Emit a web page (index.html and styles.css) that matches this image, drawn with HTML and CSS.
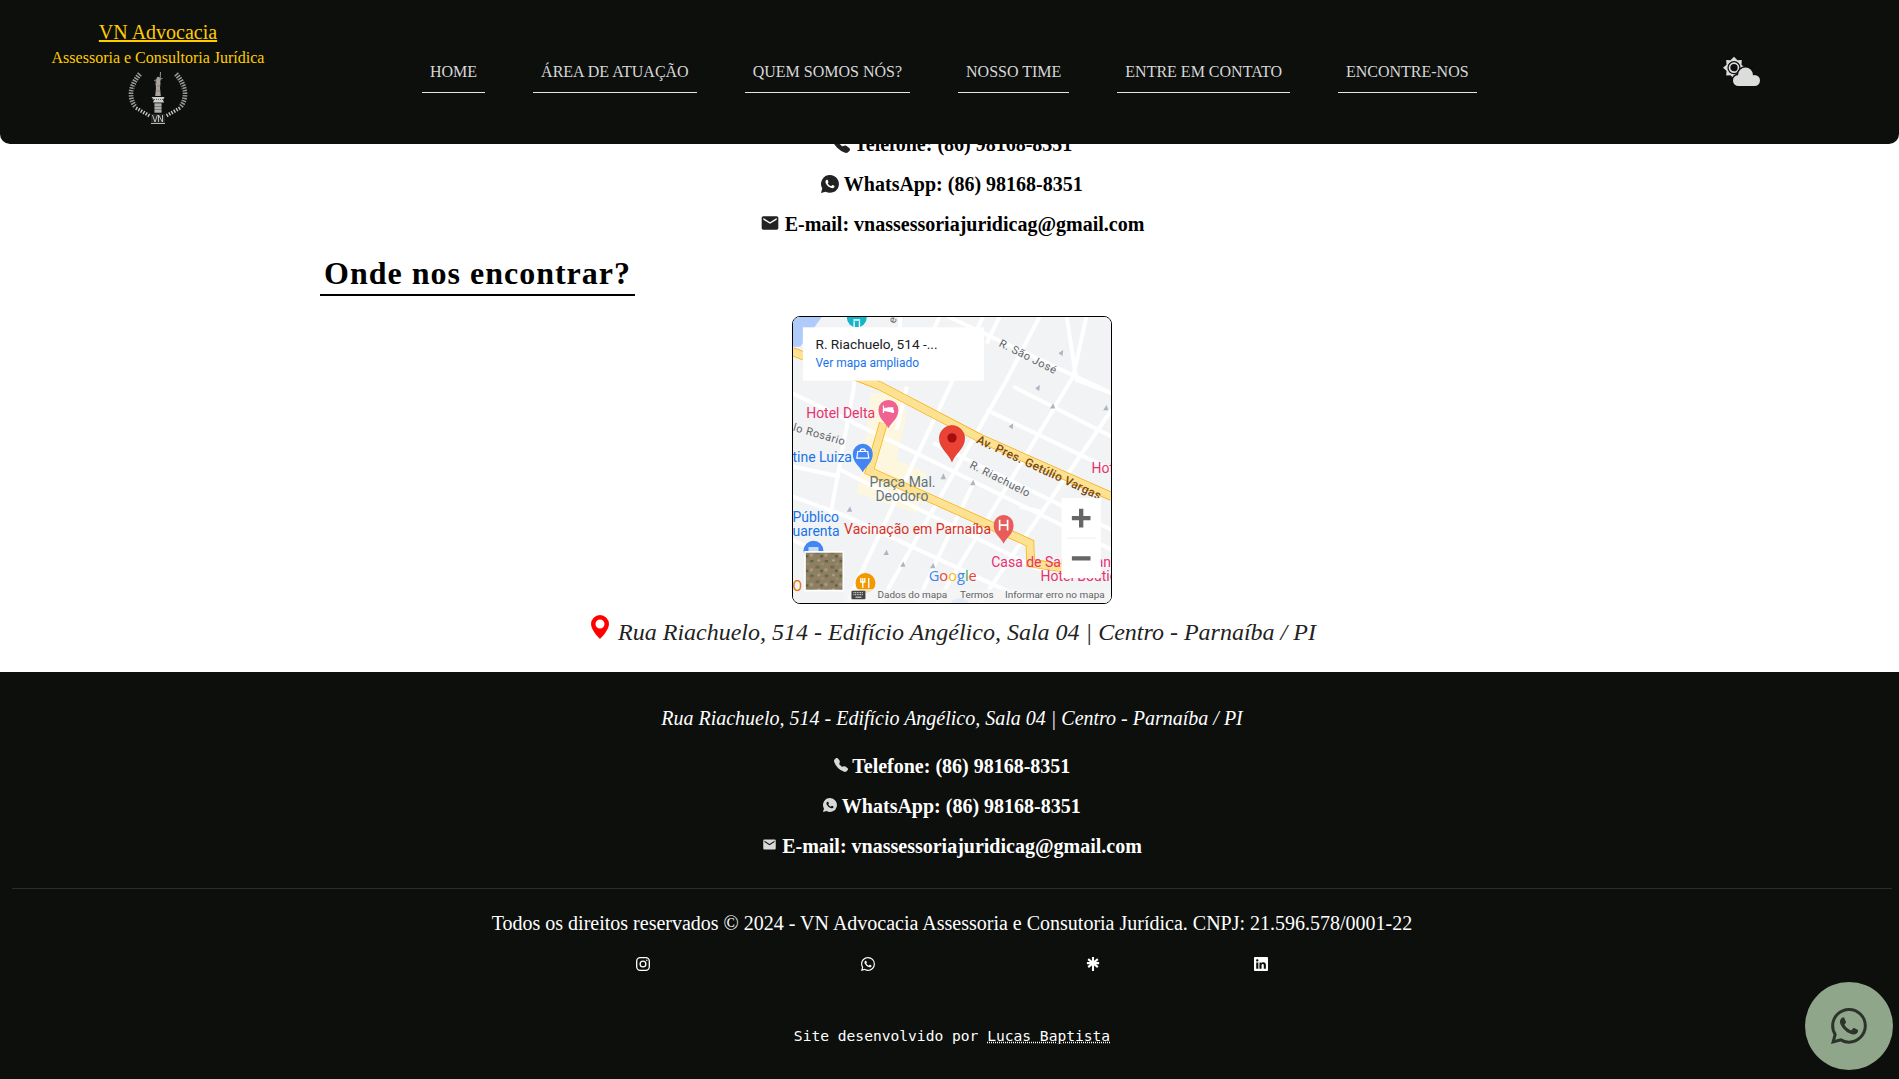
FILE: index.html
```html
<!DOCTYPE html>
<html lang="pt-BR">
<head>
<meta charset="utf-8">
<title>VN Advocacia</title>
<link rel="stylesheet" href="styles.css">
</head>
<body>
<div class="page">
  <header class="topbar">
    <div class="brand">
      <a class="brand-name" href="#">VN Advocacia</a>
      <div class="brand-sub">Assessoria e Consultoria Jurídica</div>
      <svg class="emblem" viewBox="0 0 60 52" width="60" height="52">
        <g fill="none" stroke="#9a9a9a" stroke-width="5" stroke-dasharray="1.500 1.100">
          <path d="M12 2C1 14 1 28 8 35"/>
          <path d="M48 2C59 14 59 28 52 35"/>
        </g>
        <g fill="none" stroke="#c8c8c8" stroke-width="3.500" stroke-dasharray="1.400 1.400">
          <path d="M8 36L22 44"/>
          <path d="M52 36L38 44"/>
        </g>
        <path d="M6.500 12C5 20 5.500 27 9 33M53.500 12C55 20 54.500 27 51 33" fill="none" stroke="#0d0f0d" stroke-width=".7"/>
        <path d="M32.500 0L32 9M26 8.500L34.500 6.500" stroke="#cfcfcf" stroke-width=".7" fill="none"/>
        <path d="M29 5h2.500l1 6-.5 5 .8 8h-5.600l.8-8-.5-5z" fill="#a9a39c"/>
        <path d="M26 8l3 3M29 14h3M28.500 19h4" stroke="#6f6a65" stroke-width=".6" fill="none"/>
        <path d="M23.500 25h13l-1.500 3 1 2.500h-11l1-2.500z" fill="#cfcfcf"/>
        <path d="M24 27.500h12" stroke="#444" stroke-width=".8" stroke-dasharray="1 1"/>
        <rect x="26.500" y="31" width="7" height="10" fill="#7c7c7c"/>
        <path d="M26.500 33h7M26.500 36h7M26.500 39h7" stroke="#dcdcdc" stroke-width="1.100"/>
        <path d="M23 42h14v9.500H23z" fill="#262626"/>
        <path d="M24.500 43l2.500 7 2.500-7M30.500 50v-7l4 7v-7M23 51.500h14" stroke="#dedede" stroke-width=".8" fill="none"/>
      </svg>
    </div>
    <nav class="menu">
      <a class="menu-item" href="#">HOME</a>
      <a class="menu-item" href="#">ÁREA DE ATUAÇÃO</a>
      <a class="menu-item" href="#">QUEM SOMOS NÓS?</a>
      <a class="menu-item" href="#">NOSSO TIME</a>
      <a class="menu-item" href="#">ENTRE EM CONTATO</a>
      <a class="menu-item" href="#">ENCONTRE-NOS</a>
    </nav>
    <svg class="weather" viewBox="0 0 38 32" width="38" height="32">
      <path transform="translate(0 -1.300)" fill="#dcdcdc" d="M22 13L18.500 16 18.780 20.780 14.500 20.500 11 24 7.500 20.500 3.220 20.780 3.500 16 0 13 3.500 10 3.220 5.220 7.500 5.500 11 2 14.500 5.500 18.780 5.220 18.500 10z"/>
      <circle cx="11" cy="11.700" r="6.600" fill="#0d0f0d"/>
      <circle cx="11" cy="11.700" r="4.500" fill="none" stroke="#dcdcdc" stroke-width="1.700"/>
      <g fill="#0d0f0d">
        <circle cx="15.500" cy="24.500" r="7"/>
        <circle cx="22.500" cy="19" r="9"/>
      </g>
      <g fill="#dcdcdc">
        <circle cx="15.500" cy="24.500" r="5.500"/>
        <circle cx="22.500" cy="19" r="7.500"/>
        <circle cx="31.500" cy="24.500" r="5.500"/>
        <rect x="15.500" y="22" width="16" height="8"/>
      </g>
    </svg>
  </header>

  <main class="content">
    <p class="contact-line">
      <svg class="ico" viewBox="0 0 16 16" width="18" height="18"><path d="M1.885.511a1.745 1.745 0 0 1 2.61.163L6.29 2.98c.329.423.445.974.315 1.494l-.547 2.19a.678.678 0 0 0 .178.643l2.457 2.457a.678.678 0 0 0 .644.178l2.189-.547a1.745 1.745 0 0 1 1.494.315l2.306 1.794c.829.645.905 1.87.163 2.611l-1.034 1.034c-.74.74-1.846 1.065-2.877.702a18.634 18.634 0 0 1-7.01-4.42 18.634 18.634 0 0 1-4.42-7.009c-.362-1.03-.037-2.137.703-2.877L1.885.511z"/></svg>
      Telefone: (86) 98168-8351
    </p>
    <p class="contact-line">
      <svg class="ico" viewBox="0 0 16 16" width="18" height="18"><path d="M8 0a7.930 7.930 0 0 0-6.880 11.890L0 16l4.200-1.100A7.930 7.930 0 1 0 8 0z"/><path fill="#fff" d="M11.609 9.587c-.197-.099-1.17-.578-1.353-.646-.182-.065-.315-.099-.445.099-.133.197-.513.646-.627.775-.114.133-.232.148-.43.05-.197-.1-.836-.308-1.592-.985-.59-.525-.985-1.175-1.103-1.372-.114-.198-.011-.304.088-.403.087-.088.197-.232.296-.346.1-.114.133-.198.198-.33.065-.134.034-.248-.015-.347-.05-.099-.445-1.076-.612-1.47-.16-.389-.323-.335-.445-.34-.114-.007-.247-.007-.38-.007a.729.729 0 0 0-.529.247c-.182.198-.691.677-.691 1.654 0 .977.71 1.916.81 2.049.098.133 1.394 2.132 3.383 2.992.47.205.84.326 1.129.418.475.152.904.129 1.246.08.38-.058 1.171-.48 1.338-.943.164-.464.164-.86.114-.943-.049-.084-.182-.133-.38-.232z"/></svg>
      WhatsApp: (86) 98168-8351
    </p>
    <p class="contact-line">
      <svg class="ico" viewBox="0 0 24 24" width="20" height="20"><path d="M20 4H4c-1.100 0-1.990.9-1.990 2L2 18c0 1.100.9 2 2 2h16c1.100 0 2-.9 2-2V6c0-1.100-.9-2-2-2zm0 4l-8 5-8-5V6l8 5 8-5v2z"/></svg>
      E-mail: vnassessoriajuridicag@gmail.com
    </p>

    <h2 class="section-title">Onde nos encontrar?</h2>

    <div class="map-frame">
      <svg class="map" viewBox="37 18 958 862" width="320" height="287">
        <defs>
          <pattern id="sat" width="44" height="44" patternUnits="userSpaceOnUse">
            <rect width="44" height="44" fill="#8f7f62"/>
            <rect x="2" y="3" width="10" height="7" fill="#5a6645"/>
            <rect x="24" y="1" width="8" height="6" fill="#b5a588"/>
            <rect x="18" y="20" width="12" height="8" fill="#6b6a4c"/>
            <rect x="1" y="28" width="9" height="9" fill="#ad9c7f"/>
            <rect x="33" y="32" width="7" height="7" fill="#4f5a3e"/>
            <rect x="36" y="12" width="6" height="6" fill="#a39274"/>
          </pattern>
        </defs>
        <rect x="37" y="18" width="958" height="862" fill="#f1f3f4"/>
        <path d="M37 18h90L60 110H37z" fill="#aecbfa"/>
        <ellipse cx="540" cy="888" rx="30" ry="22" fill="#aecbfa"/>
        <path d="M270 250h80l30 60-30 140 90 40-30 120-180-60 30-180z" fill="#fef7e0"/>
        <g fill="none" stroke="#fff" stroke-width="12">
          <path d="M37 250L460 455 995 720"/>
          <path d="M500 18L995 250"/>
          <path d="M700 230L995 380"/>
          <path d="M460 400L995 660"/>
          <path d="M180 480L800 790"/>
          <path d="M37 560L200 620 760 880"/>
          <path d="M200 880L610 18"/>
          <path d="M300 880L680 210 780 18"/>
          <path d="M470 880L880 200 920 18"/>
          <path d="M600 880L995 300"/>
          <path d="M150 620L220 240 240 18"/>
          <path d="M860 18L890 210 995 250"/>
          <path d="M37 470L180 500"/>
          <path d="M720 590L780 605"/>
          <path d="M360 18L360 60M350 360L380 230"/>
          <path d="M37 690L190 760M480 18L440 100M660 18L620 100"/>
          <path d="M560 790L700 850 800 880"/>
          <path d="M620 300L995 480"/>
          <path d="M410 880L580 520"/>
        </g>
        <g fill="none" stroke="#f9ab00" stroke-width="26" stroke-linejoin="miter">
          <path d="M37 125L300 228 600 385 995 560"/>
          <path d="M310 340L268 484 750 700 752 760 850 775"/>
        </g>
        <g fill="none" stroke="#fde293" stroke-width="22" stroke-linejoin="miter">
          <path d="M37 125L300 228 600 385 995 560"/>
          <path d="M310 340L268 484 750 700 752 760 850 775"/>
        </g>
        <g fill="#adb5c2">
          <path d="M850 120l-14 10 12 8z"/><path d="M780 225l-14 10 12 8z"/><path d="M700 340l-14 10 12 8z"/>
          <path d="M820 280l-10 16h16z"/><path d="M980 285l-10 16h16z"/><path d="M580 510l-10 16h16z"/>
          <path d="M490 490l-8 18h16z"/><path d="M210 590l-10 16h16z"/><path d="M320 720l-10 16h16z"/><path d="M370 755l-10 16h16z"/><path d="M460 760l-10 16h16z"/>
        </g>
        <g font-family="Roboto, sans-serif">
          <text class="lbl-road" x="0" y="0" transform="translate(345 42) rotate(-70)">elle</text>
          <text class="lbl-road" x="0" y="0" transform="translate(655 107) rotate(27)">R. São José</text>
          <text class="lbl-road" x="0" y="0" transform="translate(37 362) rotate(16)">lo Rosário</text>
          <text class="lbl-road" x="0" y="0" transform="translate(567 472) rotate(27)">R. Riachuelo</text>
          <text class="lbl-av" x="0" y="0" transform="translate(587 398) rotate(25)">Av. Pres. Getúlio Vargas</text>
          <text class="lbl-poi" x="78" y="325" fill="#e8316f">Hotel Delta</text>
          <text class="lbl-poi" x="935" y="490" fill="#e8316f">Hot</text>
          <text class="lbl-poi" x="37" y="457" fill="#1a73e8">tine Luiza</text>
          <text class="lbl-park" x="268" y="533">Praça Mal.</text>
          <text class="lbl-park" x="286" y="574">Deodoro</text>
          <text class="lbl-poi" x="37" y="638" fill="#1a73e8">Público</text>
          <text class="lbl-poi" x="37" y="680" fill="#1a73e8">uarenta</text>
          <text class="lbl-poi" x="192" y="673" fill="#d93025">Vacinação em Parnaíba</text>
          <text class="lbl-poi" x="634" y="772" fill="#e8316f">Casa de Saúde Santo</text>
          <text class="lbl-poi" x="782" y="814" fill="#e8316f">Hotel Boutique</text>
          <text class="lbl-poi" x="37" y="845" fill="#e37400">O Porto</text>
        </g>
        <path d="M325 355c-8-18-30-28-30-55a30 30 0 0 1 60 0c0 27-22 37-30 55z" fill="#f06292"/>
        <path d="M310 287v22M310 302h30v7M314 295h8v5h-8zM324 294h14v6h-14z" stroke="#fff" stroke-width="3.500" fill="#fff"/>
        <path d="M248 488c-8-18-30-28-30-56a30 30 0 0 1 60 0c0 28-22 38-30 56z" fill="#4285f4"/>
        <path d="M233 425h30l3 20h-36zM240 425a8 8 0 0 1 16 0" fill="none" stroke="#fff" stroke-width="3.500"/>
        <path d="M671 702c-8-18-30-28-30-56a30 30 0 0 1 60 0c0 28-22 38-30 56z" fill="#e85c5c"/>
        <path d="M659 630v32M683 630v32M659 646h24" stroke="#fff" stroke-width="5" fill="none"/>
        <path d="M200 22a30 30 0 0 0 60 0 30 30 0 0 0-2-8h-56a30 30 0 0 0-2 8z" fill="#12b5cb"/>
        <path d="M220 30h20M222 34v18M238 34v18" stroke="#fff" stroke-width="4"/>
        <circle cx="100" cy="723" r="30" fill="#4285f4"/>
        <path d="M85 712h30v20h-30z" fill="#fff" opacity=".7"/>
        <circle cx="256" cy="820" r="30" fill="#f29900"/>
        <path d="M248 805v30M266 805v30M242 805v12h12v-12" stroke="#fff" stroke-width="4" fill="none"/>
        <path d="M516 456c-8-24-38-40-38-71a38 38 0 0 1 76 0c0 31-30 47-38 71z" fill="#ea4335" stroke="#c5221f" stroke-width="1.500"/>
        <circle cx="516" cy="384" r="14" fill="#a50e0e"/>
        <rect x="68" y="52" width="544" height="160" fill="#fff"/>
        <text class="card-title" x="106" y="118">R. Riachuelo, 514 -...</text>
        <text class="card-link" x="106" y="172">Ver mapa ampliado</text>
        <rect x="845" y="565" width="118" height="240" fill="#fff"/>
        <rect x="860" y="684" width="88" height="2" fill="#e6e6e6"/>
        <path d="M904 597v56M876 625h56M876 746h56" stroke="#666" stroke-width="13" fill="none"/>
        <rect x="72" y="724" width="120" height="121" fill="#fff"/>
        <rect x="77" y="729" width="110" height="111" fill="url(#sat)"/>
        <rect x="190" y="838" width="805" height="42" fill="#f5f5f5" opacity=".75"/>
        <text class="google" x="446" y="815"><tspan fill="#4285f4">G</tspan><tspan fill="#ea4335">o</tspan><tspan fill="#fbbc05">o</tspan><tspan fill="#4285f4">g</tspan><tspan fill="#34a853">l</tspan><tspan fill="#ea4335">e</tspan></text>
        <rect x="214" y="843" width="42" height="26" rx="3" fill="#444"/>
        <path d="M220 849h30M220 855h30" stroke="#eee" stroke-width="3" stroke-dasharray="3 2"/>
        <rect x="226" y="861" width="18" height="3" fill="#eee"/>
        <text class="map-foot" x="292" y="866">Dados do mapa</text>
        <text class="map-foot" x="540" y="866">Termos</text>
        <text class="map-foot" x="675" y="866">Informar erro no mapa</text>
      </svg>
    </div>

    <p class="address">
      <svg class="pin" viewBox="0 0 16 16" width="24" height="24"><path d="M8 16s6-5.686 6-10A6 6 0 0 0 2 6c0 4.314 6 10 6 10zm0-7a3 3 0 1 1 0-6 3 3 0 0 1 0 6z"/></svg>
      <em>Rua Riachuelo, 514 - Edifício Angélico, Sala 04 | Centro - Parnaíba / PI</em>
    </p>
  </main>

  <footer class="footer">
    <p class="footer-address"><em>Rua Riachuelo, 514 - Edifício Angélico, Sala 04 | Centro - Parnaíba / PI</em></p>
    <p class="contact-line footer-first">
      <svg class="ico ico-light" viewBox="0 0 16 16" width="14" height="14"><path d="M1.885.511a1.745 1.745 0 0 1 2.61.163L6.29 2.98c.329.423.445.974.315 1.494l-.547 2.19a.678.678 0 0 0 .178.643l2.457 2.457a.678.678 0 0 0 .644.178l2.189-.547a1.745 1.745 0 0 1 1.494.315l2.306 1.794c.829.645.905 1.87.163 2.611l-1.034 1.034c-.74.74-1.846 1.065-2.877.702a18.634 18.634 0 0 1-7.01-4.42 18.634 18.634 0 0 1-4.42-7.009c-.362-1.03-.037-2.137.703-2.877L1.885.511z"/></svg>
      Telefone: (86) 98168-8351
    </p>
    <p class="contact-line">
      <svg class="ico ico-light" viewBox="0 0 16 16" width="14" height="14"><path d="M8 0a7.930 7.930 0 0 0-6.880 11.890L0 16l4.200-1.100A7.930 7.930 0 1 0 8 0z"/><path fill="#0d0f0d" d="M11.609 9.587c-.197-.099-1.17-.578-1.353-.646-.182-.065-.315-.099-.445.099-.133.197-.513.646-.627.775-.114.133-.232.148-.43.05-.197-.1-.836-.308-1.592-.985-.59-.525-.985-1.175-1.103-1.372-.114-.198-.011-.304.088-.403.087-.088.197-.232.296-.346.1-.114.133-.198.198-.33.065-.134.034-.248-.015-.347-.05-.099-.445-1.076-.612-1.47-.16-.389-.323-.335-.445-.34-.114-.007-.247-.007-.38-.007a.729.729 0 0 0-.529.247c-.182.198-.691.677-.691 1.654 0 .977.71 1.916.81 2.049.098.133 1.394 2.132 3.383 2.992.47.205.84.326 1.129.418.475.152.904.129 1.246.08.38-.058 1.171-.48 1.338-.943.164-.464.164-.86.114-.943-.049-.084-.182-.133-.38-.232z"/></svg>
      WhatsApp: (86) 98168-8351
    </p>
    <p class="contact-line">
      <svg class="ico ico-light" viewBox="0 0 24 24" width="15" height="15"><path d="M20 4H4c-1.100 0-1.990.9-1.990 2L2 18c0 1.100.9 2 2 2h16c1.100 0 2-.9 2-2V6c0-1.100-.9-2-2-2zm0 4l-8 5-8-5V6l8 5 8-5v2z"/></svg>
      E-mail: vnassessoriajuridicag@gmail.com
    </p>
    <hr class="rule">
    <p class="copyright">Todos os direitos reservados © 2024 - VN Advocacia Assessoria e Consutoria Jurídica. CNPJ: 21.596.578/0001-22</p>
    <div class="socials">
      <a class="social" href="#" aria-label="Instagram"><svg viewBox="0 0 16 16" width="14" height="14" fill="none" stroke="#fff"><rect x=".8" y=".8" width="14.400" height="14.400" rx="4" stroke-width="1.500"/><circle cx="8" cy="8" r="3.300" stroke-width="1.500"/><circle cx="12.300" cy="3.700" r=".9" fill="#fff" stroke="none"/></svg></a>
      <a class="social" href="#" aria-label="WhatsApp"><svg viewBox="0 0 16 16" width="14" height="14" fill="#fff"><path d="M13.601 2.326A7.854 7.854 0 0 0 7.994 0C3.627 0 .068 3.558.064 7.926c0 1.399.366 2.76 1.057 3.965L0 16l4.204-1.102a7.933 7.933 0 0 0 3.79.965h.004c4.368 0 7.926-3.558 7.93-7.93A7.898 7.898 0 0 0 13.6 2.326zM7.994 14.521a6.573 6.573 0 0 1-3.356-.92l-.24-.144-2.494.654.666-2.433-.156-.251a6.56 6.56 0 0 1-1.007-3.505c0-3.626 2.957-6.584 6.591-6.584a6.56 6.56 0 0 1 4.66 1.931 6.557 6.557 0 0 1 1.928 4.66c-.004 3.639-2.961 6.592-6.592 6.592zm3.615-4.934c-.197-.099-1.17-.578-1.353-.646-.182-.065-.315-.099-.445.099-.133.197-.513.646-.627.775-.114.133-.232.148-.43.05-.197-.1-.836-.308-1.592-.985-.59-.525-.985-1.175-1.103-1.372-.114-.198-.011-.304.088-.403.087-.088.197-.232.296-.346.1-.114.133-.198.198-.33.065-.134.034-.248-.015-.347-.05-.099-.445-1.076-.612-1.47-.16-.389-.323-.335-.445-.34-.114-.007-.247-.007-.38-.007a.729.729 0 0 0-.529.247c-.182.198-.691.677-.691 1.654 0 .977.71 1.916.81 2.049.098.133 1.394 2.132 3.383 2.992.47.205.84.326 1.129.418.475.152.904.129 1.246.08.38-.058 1.171-.48 1.338-.943.164-.464.164-.86.114-.943-.049-.084-.182-.133-.38-.232z"/></svg></a>
      <a class="social" href="#" aria-label="Linktree"><svg viewBox="0 0 16 16" width="14" height="14" stroke="#fff" stroke-width="2.400" fill="none"><path d="M8 0v16M2.500 2.500l11 9M13.500 2.500l-11 9M1 7h14"/></svg></a>
      <a class="social social-last" href="#" aria-label="LinkedIn"><svg viewBox="0 0 16 16" width="14" height="14" fill="#fff"><path d="M0 1.146C0 .513.526 0 1.175 0h13.65C15.474 0 16 .513 16 1.146v13.708c0 .633-.526 1.146-1.175 1.146H1.175C.526 16 0 15.487 0 14.854V1.146zm4.943 12.248V6.169H2.542v7.225h2.401zm-1.200-8.212c.837 0 1.358-.554 1.358-1.248-.015-.709-.52-1.248-1.342-1.248-.822 0-1.359.54-1.359 1.248 0 .694.521 1.248 1.327 1.248h.016zm4.908 8.212V9.359c0-.216.016-.432.08-.586.173-.431.568-.878 1.232-.878.869 0 1.216.662 1.216 1.634v3.865h2.401V9.250c0-2.220-1.184-3.252-2.764-3.252-1.274 0-1.845.7-2.165 1.193v.025h-.016a5.540 5.540 0 0 1 .016-.025V6.169h-2.400c.03.678 0 7.225 0 7.225h2.400z"/></svg></a>
    </div>
    <p class="credit">Site desenvolvido por <a class="credit-link" href="#">Lucas Baptista</a></p>
  </footer>

  <a class="float-whats" href="#" aria-label="WhatsApp">
    <svg viewBox="0 0 16 16" width="36" height="36" fill="#2b332b"><path d="M13.601 2.326A7.854 7.854 0 0 0 7.994 0C3.627 0 .068 3.558.064 7.926c0 1.399.366 2.76 1.057 3.965L0 16l4.204-1.102a7.933 7.933 0 0 0 3.79.965h.004c4.368 0 7.926-3.558 7.93-7.93A7.898 7.898 0 0 0 13.6 2.326zM7.994 14.521a6.573 6.573 0 0 1-3.356-.92l-.24-.144-2.494.654.666-2.433-.156-.251a6.56 6.56 0 0 1-1.007-3.505c0-3.626 2.957-6.584 6.591-6.584a6.56 6.56 0 0 1 4.66 1.931 6.557 6.557 0 0 1 1.928 4.66c-.004 3.639-2.961 6.592-6.592 6.592zm3.615-4.934c-.197-.099-1.17-.578-1.353-.646-.182-.065-.315-.099-.445.099-.133.197-.513.646-.627.775-.114.133-.232.148-.43.05-.197-.1-.836-.308-1.592-.985-.59-.525-.985-1.175-1.103-1.372-.114-.198-.011-.304.088-.403.087-.088.197-.232.296-.346.1-.114.133-.198.198-.33.065-.134.034-.248-.015-.347-.05-.099-.445-1.076-.612-1.47-.16-.389-.323-.335-.445-.34-.114-.007-.247-.007-.38-.007a.729.729 0 0 0-.529.247c-.182.198-.691.677-.691 1.654 0 .977.71 1.916.81 2.049.098.133 1.394 2.132 3.383 2.992.47.205.84.326 1.129.418.475.152.904.129 1.246.08.38-.058 1.171-.48 1.338-.943.164-.464.164-.86.114-.943-.049-.084-.182-.133-.38-.232z"/></svg>
  </a>
</div>
</body>
</html>
```
FILE: styles.css
```css
* { box-sizing: border-box; }
html, body { margin: 0; height: 100%; overflow: hidden; background: #fff; }
body { font-family: "Liberation Serif", "Times New Roman", serif; color: #000; }
.page { width: 1904px; position: relative; }

.topbar {
  position: absolute; top: 0; left: 0; z-index: 5;
  width: 1899px; height: 144px;
  display: flex; align-items: center;
  background: #0d0f0d;
  border-radius: 0 0 10px 10px;
}
.brand {
  width: 316px; height: 144px; flex: none;
  display: flex; flex-direction: column; align-items: center;
  padding-top: 21px;
  color: #ffcc00;
}
.brand-name { font-size: 20px; line-height: 23px; color: #ffcc00; text-decoration: underline; }
.brand-sub { font-size: 16px; line-height: 18px; margin-top: 5px; }
.emblem { margin-top: 5px; display: block; }

.menu { display: flex; gap: 48px; margin-left: 106px; }
.menu-item {
  font-size: 16px; line-height: 18px; color: #d8d8d8; text-decoration: none;
  padding: 11px 8px;
  border-top: 1px solid transparent;
  border-bottom: 1px solid #e4e4e4;
}
.weather { margin-left: 246px; flex: none; }

.content { padding: 124px 0 20px; }
.contact-line {
  margin: 0; text-align: center;
  font-size: 20px; line-height: 40px; font-weight: 700;
}
.ico { vertical-align: -2px; fill: #222; }
.ico-light { fill: #d8d8d8; vertical-align: 1px; }
.section-title {
  display: inline-block; margin: 10px 0 0 320px; padding: 0 4px 1px;
  font-size: 32px; line-height: 39px; font-weight: 700; letter-spacing: 1px;
  border-bottom: 2px solid #000;
}
.map-frame {
  width: 320px; height: 288px; margin: 20px auto 0;
  border: 1px solid #000; border-radius: 8px; overflow: hidden;
}
.map { display: block; margin: -1px; }
.address { margin: 8px 0 0; text-align: center; font-size: 24px; line-height: 40px; color: #222; }
.pin { fill: #f00; vertical-align: 1px; }

.lbl-road { font-size: 33px; fill: #5f6368; letter-spacing: 1.500px; }
.lbl-av { font-size: 36px; font-weight: 500; fill: #7a4a12; letter-spacing: 1px; }
.lbl-poi { font-size: 42px; }
.lbl-park { font-size: 42px; fill: #5f7283; }
.card-title { font: 400 41px Roboto, sans-serif; fill: #202124; }
.card-link { font: 400 36px Roboto, sans-serif; fill: #1a73e8; }
.google { font: 500 44px "Open Sans", Roboto, sans-serif; }
.map-foot { font: 400 30px Roboto, sans-serif; fill: #5f6368; }

.footer { height: 407px; padding-top: 26px; background: #0d0f0d; color: #fff; }
.footer p { color: #fff; }
.footer-address { margin: 0; text-align: center; font-size: 20px; line-height: 40px; }
.footer-first { margin-top: 8px; }
.rule { margin: 22px 12px 0; border: 0; border-top: 1px solid #2a2d2a; }
.copyright { margin: 14px 0 0; text-align: center; font-size: 20px; line-height: 40px; }
.socials { display: flex; justify-content: center; gap: 211px; margin-top: 14px; height: 14px; }
.social { display: block; width: 14px; height: 14px; }
.social svg { display: block; }
.social-last { margin-left: -57px; }
.credit {
  margin: 55px 0 0; text-align: center;
  font-family: "DejaVu Sans Mono", monospace; font-size: 14.6px; line-height: 20px;
}
.credit-link { color: #fff; text-decoration: underline dotted; }

.float-whats {
  position: fixed; right: 6px; bottom: 9px; z-index: 6;
  width: 88px; height: 88px; border-radius: 50%;
  background: #8fa68a;
  display: flex; align-items: center; justify-content: center;
}
```
